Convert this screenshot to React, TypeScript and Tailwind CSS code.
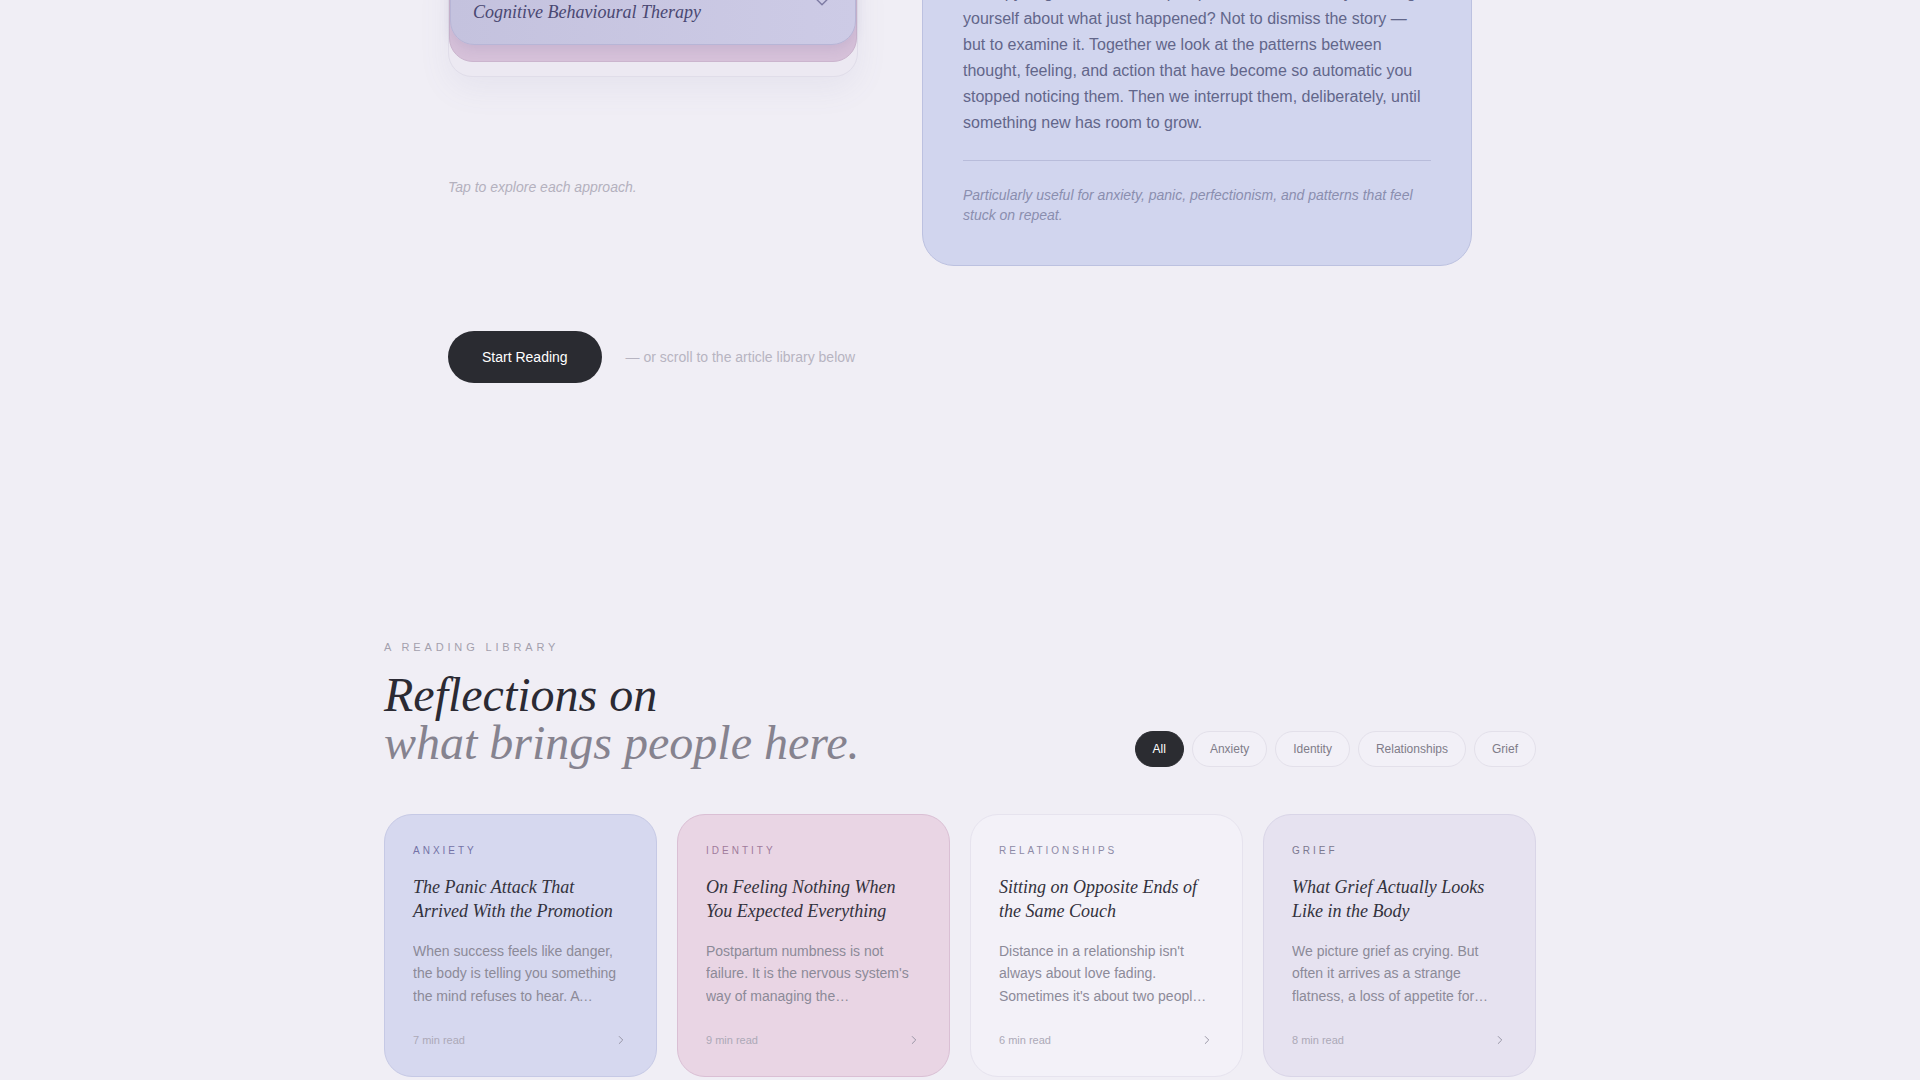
import { ChevronDown, ChevronRight } from 'lucide-react';

const sans = { fontFamily: '"Liberation Sans", Arial, sans-serif' };

const serif = '[font-family:"Liberation_Serif",serif]';

interface Article {
  tag: string;
  title: string;
  excerpt: string;
  read: string;
  card: string;
  tagColor: string;
}

const articles: Article[] = [
  {
    tag: 'Anxiety',
    title: 'The Panic Attack That Arrived With the Promotion',
    excerpt:
      'When success feels like danger, the body is telling you something the mind refuses to hear. A promotion can wake up old fears about being seen.',
    read: '7 min read',
    card: 'bg-[#d6d8ef] border-[#c6c9e5]',
    tagColor: 'text-[#7472a6]',
  },
  {
    tag: 'Identity',
    title: 'On Feeling Nothing When You Expected Everything',
    excerpt:
      "Postpartum numbness is not failure. It is the nervous system's way of managing the overwhelming weight of a brand new life.",
    read: '9 min read',
    card: 'bg-[#e9d5e4] border-[#dabfd4]',
    tagColor: 'text-[#a07b9b]',
  },
  {
    tag: 'Relationships',
    title: 'Sitting on Opposite Ends of the Same Couch',
    excerpt:
      "Distance in a relationship isn't always about love fading. Sometimes it's about two people protecting themselves from the same fear.",
    read: '6 min read',
    card: 'bg-[#f3f1f8] border-[#e6e3ee]',
    tagColor: 'text-[#8d8aa6]',
  },
  {
    tag: 'Grief',
    title: 'What Grief Actually Looks Like in the Body',
    excerpt:
      'We picture grief as crying. But often it arrives as a strange flatness, a loss of appetite for things that once mattered most.',
    read: '8 min read',
    card: 'bg-[#e6e2f0] border-[#d9d5e7]',
    tagColor: 'text-[#7b788f]',
  },
];

const filters = ['All', 'Anxiety', 'Identity', 'Relationships', 'Grief'];

function ApproachStack() {
  return (
    <div>
      {/* heading of the left column, scrolled out of view */}
      <p className="text-[11px] leading-4 uppercase tracking-[0.35em] text-[#a3a0ad]">Approaches</p>
      <h2 className={`${serif} mt-2 mb-[34px] text-3xl leading-9 italic text-[#2b2a33]`}>Ways we work</h2>

      {/* three stacked cards */}
      <div className="rounded-3xl border border-[#e0dde9] bg-[#ece9f2] pb-[14px] shadow-[0_12px_32px_rgba(120,110,170,0.08)]">
        <div className="rounded-3xl border border-[#cbb5ce] bg-[#d6c1d9] pb-4">
          <div className="rounded-3xl border border-[#b7b5d6] bg-gradient-to-r from-[#c4c2de] to-[#cdcbe6] px-[22px] pt-6 pb-5 shadow-[0_4px_12px_rgba(90,80,140,0.12)]">
            <div className="flex items-center justify-between">
              <div>
                <p className="text-[10px] leading-4 uppercase tracking-[0.3em] text-[#7d7ba6]">Approach 03</p>
                <p className={`${serif} mt-1 text-lg leading-6 italic text-[#4a4872]`}>
                  Cognitive Behavioural Therapy
                </p>
              </div>
              <ChevronDown size={22} strokeWidth={1.5} className="text-[#7c7aa3]" />
            </div>
          </div>
        </div>
      </div>

      <p className="mt-[100px] text-sm leading-5 italic text-[#b4b1be]">Tap to explore each approach.</p>
    </div>
  );
}

function ApproachDetail() {
  return (
    <div className="rounded-[32px] border border-[#bcc1e0] bg-[#d1d5ee] p-10">
      <p className="text-[11px] leading-4 uppercase tracking-[0.35em] text-[#7d80a8]">How it works</p>
      <h3 className={`${serif} mt-3 mb-5 text-[26px] leading-8 italic text-[#3d3f66]`}>
        Cognitive Behavioural Therapy
      </h3>
      <p className="text-base leading-[1.625] text-[#62668a]">
        Therapy begins with one simple question — what are you telling yourself about what just
        happened? Not to dismiss the story — but to examine it. Together we look at the patterns
        between thought, feeling, and action that have become so automatic you stopped noticing
        them. Then we interrupt them, deliberately, until something new has room to grow.
      </p>
      <div className="mt-6 border-t border-[#b8bcda] pt-6">
        <p className="text-sm leading-5 italic text-[#8a8eae]">
          Particularly useful for anxiety, panic, perfectionism, and patterns that feel stuck on repeat.
        </p>
      </div>
    </div>
  );
}

function ArticleCard({ a }: { a: Article }) {
  return (
    <article className={`flex flex-col rounded-[28px] border p-7 ${a.card}`}>
      <p className={`text-[10px] leading-4 uppercase tracking-[0.3em] ${a.tagColor}`}>{a.tag}</p>
      <h3 className={`${serif} mt-4 text-lg leading-6 italic text-[#33323d]`}>{a.title}</h3>
      <p className="mt-[17px] line-clamp-3 text-sm leading-[1.6] text-[#8c8a98]">{a.excerpt}</p>
      <div className="mt-[25px] flex items-center justify-between">
        <span className="text-[11px] leading-4 text-[#aca9b7]">{a.read}</span>
        <ChevronRight size={14} strokeWidth={1.5} className="text-[#8e8c9c]" />
      </div>
    </article>
  );
}

export default function App() {
  return (
    <div className="min-h-screen overflow-hidden bg-[#f0eef5] pb-24" style={sans}>
      {/* approaches, page scrolled part way */}
      <section className="mx-auto -mt-[141px] max-w-5xl">
        <div className="grid grid-cols-[410px_1fr] items-start gap-16">
          <ApproachStack />
          <ApproachDetail />
        </div>

        <div className="mt-[65px] flex items-center gap-6">
          <button className="h-[52px] rounded-full bg-[#2a2b31] px-[34px] text-sm text-white">
            Start Reading
          </button>
          <span className="text-sm text-[#b7b4c1]">— or scroll to the article library below</span>
        </div>
      </section>

      {/* reading library */}
      <section className="mx-auto mt-64 max-w-6xl">
        <div className="flex items-end justify-between">
          <div>
            <p className="text-[11px] leading-4 uppercase tracking-[0.35em] text-[#a3a0ad]">A Reading Library</p>
            <h2 className={`${serif} mt-4 text-5xl leading-none italic`}>
              <span className="block text-[#2b2a33]">Reflections on</span>
              <span className="block text-[#86838f]">what brings people here.</span>
            </h2>
          </div>

          <div className="flex items-center gap-2">
            {filters.map((f, i) => (
              <button
                key={f}
                className={
                  i === 0
                    ? 'rounded-full border border-[#2b2c31] bg-[#2b2c31] px-[17px] py-[9px] text-xs leading-4 text-white'
                    : 'rounded-full border border-[#e3e0ea] bg-[#f2f0f7] px-[17px] py-[9px] text-xs leading-4 text-[#7f7c89]'
                }
              >
                {f}
              </button>
            ))}
          </div>
        </div>

        <div className="mt-[47px] grid grid-cols-4 gap-5">
          {articles.map((a) => (
            <ArticleCard key={a.tag} a={a} />
          ))}
        </div>
      </section>
    </div>
  );
}
